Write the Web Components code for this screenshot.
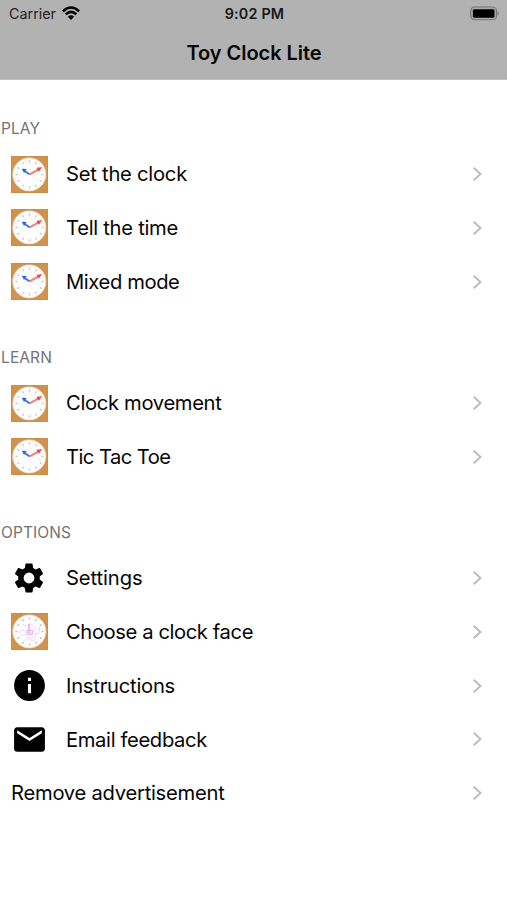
<!DOCTYPE html>
<html lang="en">
<head>
<meta charset="utf-8">
<title>Toy Clock Lite</title>
<style>
html,body{margin:0;height:100%;background:#fff;overflow:hidden}
body{font-family:Inter,"Liberation Sans",sans-serif;color:#060606}
</style>
</head>
<body>
<toy-app></toy-app>
<script>
// Text run whose tracking is adjusted so that it occupies a set width.
class FitText extends HTMLElement {
  constructor() {
    super();
    this.attachShadow({mode: 'open'}).innerHTML =
      '<style>:host{display:inline-block;white-space:nowrap;line-height:1.2}span{display:inline-block}</style><span></span>';
  }
  connectedCallback() {
    const span = this.shadowRoot.querySelector('span');
    const text = this.getAttribute('text');
    span.textContent = text;
    const target = parseFloat(this.getAttribute('fit'));
    span.style.letterSpacing = (target - span.getBoundingClientRect().width) / text.length + 'px';
  }
}
customElements.define('fit-text', FitText);

const ticks = color => Array.from({length: 12}, (_, i) =>
  `<path d="M18.5 4.4V6.6" transform="rotate(${i * 30} 18.5 18.5)" stroke="${color}" stroke-width="1.5"/>`).join('');
const face = (inner, tick) => `<svg width="37" height="37" viewBox="0 0 37 37" fill="none">
  <rect width="37" height="37" fill="#d1934b"/><rect x=".5" y=".5" width="36" height="36" stroke="#c48a48" stroke-opacity=".6"/>
  <circle cx="18.3" cy="18.4" r="16.5" fill="#fdfdfd" stroke="#ecdfcf" stroke-width=".8"/>${ticks(tick)}${inner}</svg>`;
const material = (size, d) => `<svg width="${size}" height="${size}" viewBox="0 0 24 24" fill="#000"><path d="${d}"/></svg>`;
const icons = {
  clock: face(`<path d="M18.7 18.3L13.5 15" stroke="#3c7be0" stroke-width="2"/><path d="M10.800 12.800l4.900.3-2.700 4z" fill="#2468dc"/>
    <path d="M18.700 18.300L28 13.200" stroke="#f57b76" stroke-width="2"/><path d="M31 11.200l-5.500.5 2.300 4.100z" fill="#ee4845"/>`, '#cccdd0'),
  face: face(`<g stroke="#e3cbec" stroke-width=".9"><path d="M17.500 11v9h4M17.500 13l1.200-2v8M15.500 17.500h6v4h-5z" stroke="#d9b4e6"/>
    <path d="M8 20q3-6 6-1t5-1 5 1 5-4M9 24q5-5 8 0t8-3M12 11q2 4 5 1t7 2 5-1M14 28q2-5 5-1t6-4" stroke-opacity=".7"/></g>`, '#c3c4d0'),
  gear: material(36, 'M19.14 12.94c.04-.3.06-.61.06-.94 0-.32-.02-.64-.07-.94l2.03-1.58c.18-.14.23-.41.12-.61l-1.92-3.32c-.12-.22-.37-.29-.59-.22l-2.39.96c-.5-.38-1.03-.7-1.62-.94L14.4 2.81c-.04-.24-.24-.41-.48-.41h-3.84c-.24 0-.43.17-.47.41l-.36 2.54c-.59.24-1.13.57-1.62.94l-2.39-.96c-.22-.08-.47 0-.59.22L2.74 8.87c-.12.21-.08.47.12.61l2.03 1.58c-.05.3-.09.63-.09.94s.02.64.07.94l-2.03 1.58c-.18.14-.23.41-.12.61l1.92 3.32c.12.22.37.29.59.22l2.39-.96c.5.38 1.03.7 1.62.94l.36 2.54c.05.24.24.41.48.41h3.84c.24 0 .44-.17.47-.41l.36-2.54c.59-.24 1.13-.56 1.62-.94l2.39.96c.22.08.47 0 .59-.22l1.92-3.32c.12-.22.07-.47-.12-.61l-2.01-1.58zM12 15.6A3.6 3.6 0 1 1 12 8.4a3.6 3.6 0 0 1 0 7.2z'),
  info: material(37, 'M12 2a10 10 0 1 0 0 20 10 10 0 0 0 0-20zm1 15h-2v-6h2v6zm0-8h-2V7h2v2z'),
  mail: material(37, 'M20 4H4c-1.1 0-2 .9-2 2v12c0 1.100.9 2 2 2h16c1.100 0 2-.9 2-2V6c0-1.100-.9-2-2-2zm0 4l-8 5-8-5V6l8 5 8-5v2z')
};

class ToyBar extends HTMLElement {
  constructor() {
    super();
    this.attachShadow({mode: 'open'}).innerHTML = `<style>
      :host{display:block;height:79.5px;box-sizing:border-box;background:#b2b2b2;border-bottom:1px solid #bebebe}
      .status{display:grid;grid-template-columns:1fr auto 1fr;align-items:center;height:27px;padding:0 7px 0 9px;font-size:14.3px}
      .left{display:flex;align-items:center;gap:6px;color:#222}
      .time{font-weight:600;color:#161616}
      .battery{justify-self:end;display:block}
      .title{display:flex;justify-content:center;padding:13.5px 0 0 1px;font-size:20px;font-weight:600}
      svg{display:block}
    </style>
    <div class="status"><div class="left"><fit-text text="Carrier" fit="47"></fit-text>
      <svg width="18" height="15" viewBox="0 0 18 15" fill="none" stroke="#000" stroke-width="2.5"><path d="M.9 5.300Q9-2.300 17.100 5.300M3.700 8.300Q9 3.500 14.300 8.300"/><path d="M5.900 10.700Q9 7.800 12.100 10.700L9 14z" fill="#000" stroke="none"/></svg></div>
      <fit-text class="time" text="9:02 PM" fit="59.5"></fit-text>
      <svg class="battery" width="30" height="15" viewBox="0 0 31 15"><rect x=".8" y=".8" width="26.6" height="13.2" rx="4" fill="#aaa" stroke="#777" stroke-width="1.2"/><rect x="3" y="3" width="22.3" height="8.9" rx="1.5" fill="#000"/><path d="M28.500 5q2.500 2.400 0 4.800z" fill="#777"/></svg></div>
    <div class="title"><fit-text text="Toy Clock Lite" fit="135"></fit-text></div>`;
  }
}
customElements.define('toy-bar', ToyBar);

class ToySection extends HTMLElement {
  constructor() {
    super();
    this.attachShadow({mode: 'open'}).innerHTML = `<style>
      :host{display:block}
      header{height:67.7px;box-sizing:border-box;padding:39.8px 0 0 1px;font-size:15.5px;color:#737373}
    </style><header><fit-text text="${this.getAttribute('label')}" fit="${this.getAttribute('fit')}"></fit-text></header><slot></slot>`;
  }
}
customElements.define('toy-section', ToySection);

class ToyRow extends HTMLElement {
  constructor() {
    super();
    const icon = this.getAttribute('icon');
    this.attachShadow({mode: 'open'}).innerHTML = `<style>
      :host{display:flex;align-items:center;height:53.75px;box-sizing:border-box;padding:0 24.5px 0 11px;font-size:20.2px}
      .icon{display:flex;justify-content:center;width:36px;margin-right:19px}
      .chevron{margin-left:auto}
      fit-text{padding-top:.6px}
      svg{display:block;flex:none}
    </style>${icon ? `<div class="icon">${icons[icon]}</div>` : ''}
    <fit-text text="${this.getAttribute('label')}" fit="${this.getAttribute('fit')}"></fit-text>
    <svg class="chevron" width="11" height="16" viewBox="0 0 11 16" fill="none" stroke="#bdbdc0" stroke-width="2"><path d="M1.700 1.700L8.500 8 1.700 14.300"/></svg>`;
  }
}
customElements.define('toy-row', ToyRow);

class ToyApp extends HTMLElement {
  constructor() {
    super();
    this.attachShadow({mode: 'open'}).innerHTML = `<style>:host{display:block;width:507px;height:900px;background:#fff}</style>
    <toy-bar></toy-bar>
    <toy-section label="PLAY" fit="39">
      <toy-row icon="clock" label="Set the clock" fit="121"></toy-row>
      <toy-row icon="clock" label="Tell the time" fit="112"></toy-row>
      <toy-row icon="clock" label="Mixed mode" fit="113.5"></toy-row>
    </toy-section>
    <toy-section label="LEARN" fit="51">
      <toy-row icon="clock" label="Clock movement" fit="155.5"></toy-row>
      <toy-row icon="clock" label="Tic Tac Toe" fit="104.5"></toy-row>
    </toy-section>
    <toy-section label="OPTIONS" fit="70">
      <toy-row icon="gear" label="Settings" fit="76.5"></toy-row>
      <toy-row icon="face" label="Choose a clock face" fit="187"></toy-row>
      <toy-row icon="info" label="Instructions" fit="109"></toy-row>
      <toy-row icon="mail" label="Email feedback" fit="141"></toy-row>
      <toy-row label="Remove advertisement" fit="213.5"></toy-row>
    </toy-section>`;
  }
}
customElements.define('toy-app', ToyApp);
</script>
</body>
</html>
